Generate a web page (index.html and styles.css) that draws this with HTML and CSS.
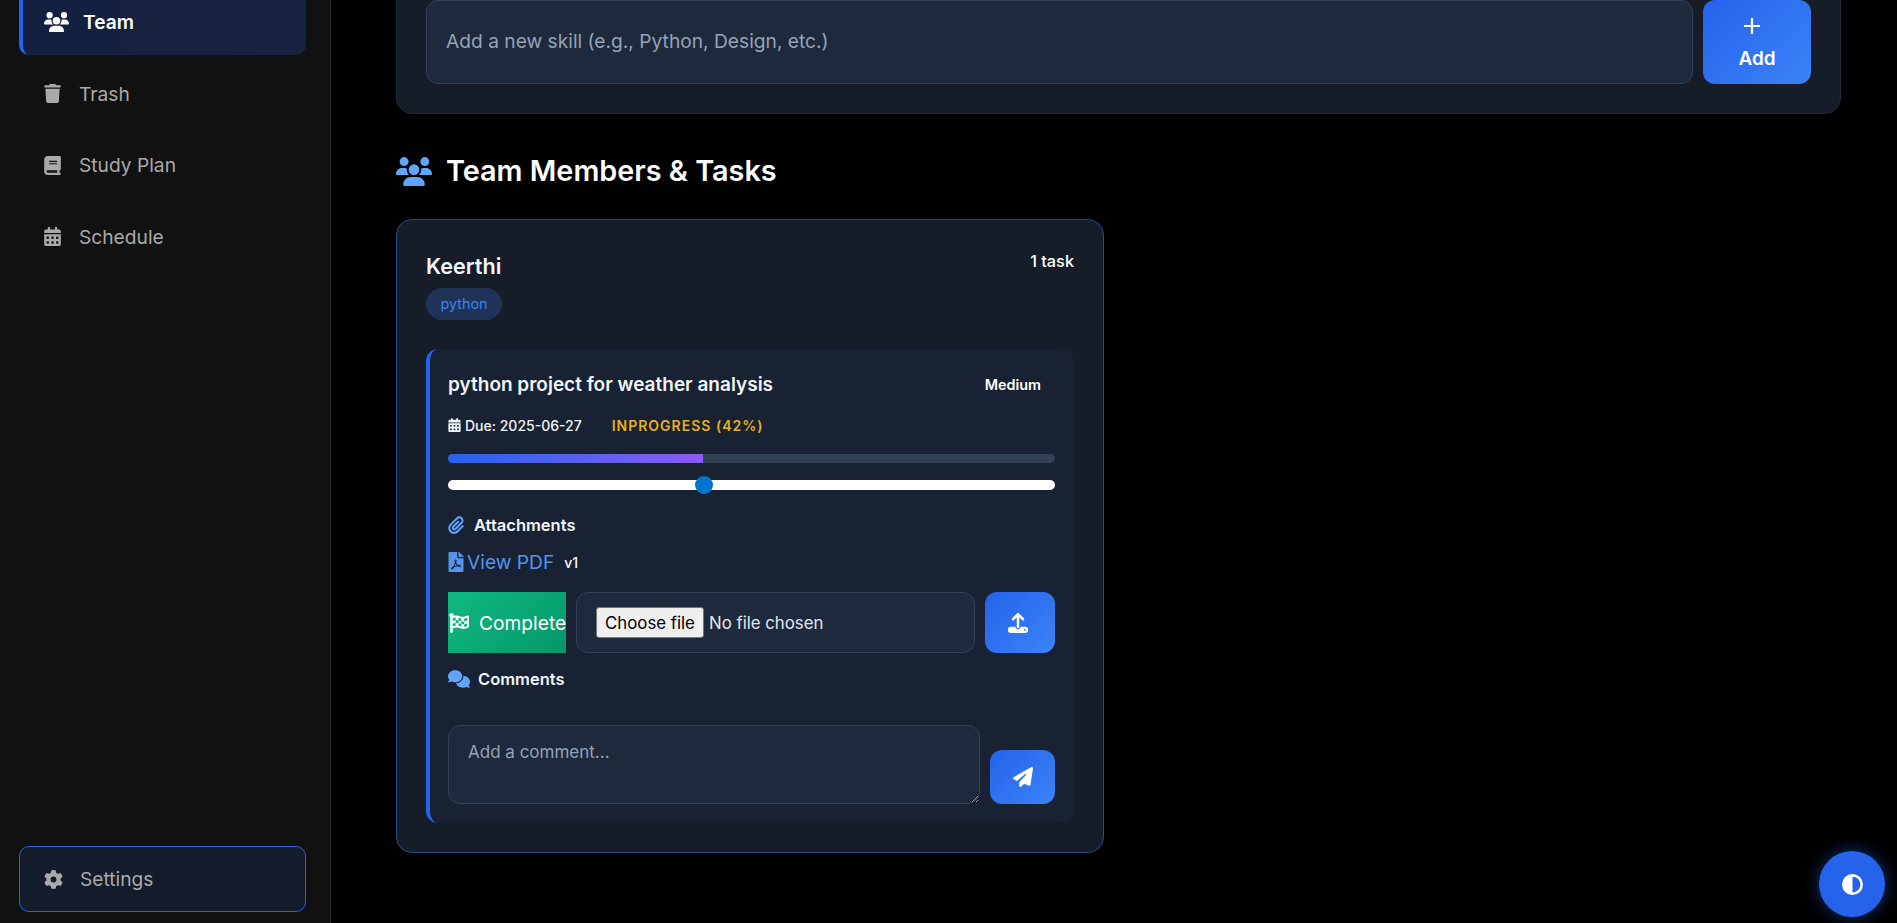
FILE: index.html
```html
<!DOCTYPE html>
<html lang="en">
	<head>
		<meta charset="UTF-8" />
		<title>Team</title>
		<link rel="stylesheet" href="styles.css">
	</head>
	<body>
		<svg class="defs" aria-hidden="true">
			<symbol id="i-users" viewBox="0 0 640 512"><path d="M144 0a80 80 0 1 1 0 160A80 80 0 1 1 144 0zM512 0a80 80 0 1 1 0 160A80 80 0 1 1 512 0zM0 298.7C0 239.8 47.8 192 106.7 192h42.7c15.9 0 31 3.5 44.6 9.7c-1.3 7.2-1.9 14.7-1.9 22.3c0 38.2 16.8 72.5 43.3 96c-.2 0-.4 0-.7 0H21.3C9.6 320 0 310.4 0 298.7zM405.3 320c-.2 0-.4 0-.7 0c26.6-23.5 43.3-57.8 43.3-96c0-7.6-.7-15-1.9-22.3c13.6-6.3 28.7-9.7 44.6-9.7h42.7C592.2 192 640 239.8 640 298.7c0 11.8-9.6 21.3-21.3 21.3H405.3zM224 224a96 96 0 1 1 192 0 96 96 0 1 1 -192 0zM128 485.3C128 411.7 187.7 352 261.3 352H378.7C452.3 352 512 411.7 512 485.3c0 14.7-11.9 26.7-26.7 26.7H154.7c-14.7 0-26.7-11.9-26.7-26.7z"/></symbol>
			<symbol id="i-trash" viewBox="0 0 448 512"><path d="M135.2 17.7L128 32H32C14.3 32 0 46.3 0 64S14.3 96 32 96H416c17.7 0 32-14.3 32-32s-14.3-32-32-32H320l-7.2-14.3C307.4 6.8 296.3 0 284.2 0H163.8c-12.1 0-23.2 6.8-28.6 17.7zM416 128H32L53.2 467c1.6 25.3 22.6 45 47.9 45H346.9c25.3 0 46.3-19.7 47.9-45L416 128z"/></symbol>
			<symbol id="i-book" viewBox="0 0 448 512"><path d="M96 0C43 0 0 43 0 96V416c0 53 43 96 96 96H384h32c17.7 0 32-14.3 32-32s-14.3-32-32-32V384c17.7 0 32-14.3 32-32V32c0-17.7-14.3-32-32-32H384 96zm0 384H352v64H96c-17.7 0-32-14.3-32-32s14.3-32 32-32zm32-240c0-8.8 7.2-16 16-16H336c8.8 0 16 7.2 16 16s-7.2 16-16 16H144c-8.8 0-16-7.2-16-16zm16 48H336c8.8 0 16 7.2 16 16s-7.2 16-16 16H144c-8.8 0-16-7.2-16-16s7.2-16 16-16z"/></symbol>
			<symbol id="i-calendar" viewBox="0 0 448 512"><path d="M128 0c17.7 0 32 14.3 32 32V64H288V32c0-17.7 14.3-32 32-32s32 14.3 32 32V64h48c26.5 0 48 21.5 48 48v48H0V112C0 85.5 21.5 64 48 64H96V32c0-17.7 14.3-32 32-32zM0 192H448V464c0 26.5-21.5 48-48 48H48c-26.5 0-48-21.5-48-48V192zm64 80v32c0 8.8 7.2 16 16 16h32c8.8 0 16-7.2 16-16V272c0-8.8-7.2-16-16-16H80c-8.8 0-16 7.2-16 16zm128 0v32c0 8.8 7.2 16 16 16h32c8.8 0 16-7.2 16-16V272c0-8.8-7.2-16-16-16H208c-8.8 0-16 7.2-16 16zm144-16c-8.8 0-16 7.2-16 16v32c0 8.8 7.2 16 16 16h32c8.8 0 16-7.2 16-16V272c0-8.8-7.2-16-16-16H336zM64 400v32c0 8.8 7.2 16 16 16h32c8.8 0 16-7.2 16-16V400c0-8.8-7.2-16-16-16H80c-8.8 0-16 7.2-16 16zm144-16c-8.8 0-16 7.2-16 16v32c0 8.8 7.2 16 16 16h32c8.8 0 16-7.2 16-16V400c0-8.8-7.2-16-16-16H208zm112 16v32c0 8.8 7.2 16 16 16h32c8.8 0 16-7.2 16-16V400c0-8.8-7.2-16-16-16H336c-8.8 0-16 7.2-16 16z"/></symbol>
			<symbol id="i-cog" viewBox="0 0 512 512"><path d="M495.9 166.6c3.2 8.7 .5 18.4-6.4 24.6l-43.3 39.4c1.1 8.3 1.7 16.8 1.7 25.4s-.6 17.1-1.7 25.4l43.3 39.4c6.9 6.2 9.6 15.9 6.4 24.6c-4.4 11.9-9.7 23.3-15.8 34.3l-4.7 8.1c-6.6 11-14 21.4-22.1 31.2c-5.9 7.2-15.7 9.6-24.5 6.8l-55.7-17.7c-13.4 10.3-28.2 18.9-44 25.4l-12.5 57.1c-2 9.1-9 16.3-18.2 17.8c-13.8 2.3-28 3.5-42.5 3.5s-28.7-1.2-42.5-3.5c-9.2-1.5-16.2-8.7-18.2-17.8l-12.5-57.1c-15.8-6.5-30.6-15.1-44-25.4L83.1 425.9c-8.8 2.8-18.6 .3-24.5-6.8c-8.1-9.8-15.5-20.2-22.1-31.2l-4.7-8.1c-6.1-11-11.4-22.4-15.8-34.3c-3.2-8.7-.5-18.4 6.4-24.6l43.3-39.4C64.6 273.1 64 264.6 64 256s.6-17.1 1.7-25.4L22.4 191.2c-6.9-6.2-9.6-15.9-6.4-24.6c4.4-11.9 9.7-23.3 15.8-34.3l4.7-8.1c6.6-11 14-21.4 22.1-31.2c5.9-7.2 15.7-9.6 24.5-6.8l55.7 17.7c13.4-10.3 28.2-18.9 44-25.4l12.5-57.1c2-9.1 9-16.3 18.2-17.8C227.3 1.2 241.5 0 256 0s28.7 1.2 42.5 3.5c9.2 1.5 16.2 8.7 18.2 17.8l12.5 57.1c15.8 6.5 30.6 15.1 44 25.4l55.7-17.7c8.8-2.8 18.6-.3 24.5 6.8c8.1 9.8 15.5 20.2 22.1 31.2l4.7 8.1c6.1 11 11.4 22.4 15.8 34.3zM256 336a80 80 0 1 0 0-160 80 80 0 1 0 0 160z"/></symbol>
			<symbol id="i-clip" viewBox="0 0 448 512"><path d="M364.2 83.8c-24.4-24.4-64-24.4-88.4 0l-184 184c-42.1 42.1-42.1 110.3 0 152.4s110.3 42.1 152.4 0l152-152c10.9-10.9 28.7-10.9 39.6 0s10.9 28.7 0 39.6l-152 152c-64 64-167.6 64-231.6 0s-64-167.6 0-231.6l184-184c46.3-46.3 121.3-46.3 167.6 0s46.3 121.3 0 167.6l-176 176c-28.6 28.6-75 28.6-103.6 0s-28.6-75 0-103.6l144-144c10.9-10.9 28.7-10.9 39.6 0s10.9 28.7 0 39.6l-144 144c-6.7 6.7-6.7 17.7 0 24.4s17.7 6.7 24.4 0l176-176c24.4-24.4 24.4-64 0-88.4z"/></symbol>
			<symbol id="i-pdf" viewBox="0 0 384 512"><path d="M181.9 256.1c-5-16-4.9-46.9-2-46.9 8.4 0 7.6 36.9 2 46.9zm-1.7 47.2c-7.7 20.2-17.3 43.3-28.4 62.7 18.3-7 39-17.2 62.9-21.9-12.7-9.6-24.9-23.4-34.5-40.8zM86.1 428.1c0 .8 13.2-5.4 34.9-40.2-6.7 6.3-29.1 24.5-34.9 40.2zM248 160h136v328c0 13.3-10.7 24-24 24H24c-13.3 0-24-10.7-24-24V24C0 10.7 10.7 0 24 0h200v136c0 13.2 10.8 24 24 24zm-8 171.8c-20-12.2-33.3-29-42.7-53.8 4.5-18.5 11.6-46.6 6.2-64.2-4.7-29.4-42.4-26.5-47.8-6.8-5 18.3-.4 44.1 8.1 77-11.6 27.6-28.7 64.6-40.8 85.8-.1 0-.1.1-.2.1-27.1 13.9-73.6 44.5-54.5 68 5.6 6.9 16 10 21.5 10 17.9 0 35.7-18 61.1-61.8 25.8-8.5 54.1-19.1 79-23.2 21.7 11.8 47.1 19.5 64 19.5 29.2 0 31.2-32 19.7-43.4-13.9-13.6-54.3-9.7-73.6-7.2zM377 105L279 7c-4.5-4.5-10.6-7-17-7h-6v128h128v-6.1c0-6.3-2.5-12.4-7-16.9zm-74.1 255.3c4.1-2.7-2.5-11.9-42.8-9 37.1 15.8 42.8 9 42.8 9z"/></symbol>
			<symbol id="i-flag" viewBox="0 0 512 512"><path d="M243.2 189.9V258c26.1 5.9 49.3 15.6 73.6 22.3v-68.2c-26-5.8-49.4-15.5-73.6-22.2zm223.3-123c-34.3 15.9-76.5 31.9-117 31.9C296 98.8 251.7 64 184.3 64c-25 0-47.3 4.4-68 12 2.8-7.3 4.1-15.2 3.6-23.6C118.1 24 94.8 1.2 66.3 0 34.3-1.3 8 24.3 8 56c0 19 9.5 35.8 24 45.9V488c0 13.3 10.7 24 24 24h16c13.3 0 24-10.7 24-24v-94.4c28.3-12.1 63.6-22.1 114.4-22.1 53.6 0 97.8 34.8 165.2 34.8 48.2 0 86.7-16.3 122.5-40.9 8.7-6 13.8-15.8 13.8-26.4V95.9c.1-23.3-24.2-38.8-45.4-29zM169.6 325.5c-25.8 2.7-50 8.7-73.6 16.6v-70.5c26.2-9.3 47.5-15 73.6-17.4zM464 191c-23.6 9.8-46.3 19.5-73.6 23.9V286c24.8-3.4 51.4-11.8 73.6-26v70.5c-25.1 16.1-48.5 24.7-73.6 27.6V286c-27 3.7-47.9 1.5-73.6-5.6v67.4c-23.9-7.4-47.3-16.7-73.6-21.3V258c-19.7-4.4-40.8-6.8-73.6-3.8v-70c-22.4 3.1-44.6 10.2-73.6 20.9v-70.5c33.2-12.2 50.1-19.8 73.6-22v71.6c27-3.7 48.4-1.3 73.6 5.7v-67.4c23.7 7.4 47.2 16.7 73.6 21.3v68.4c23.7 5.3 47.6 6.9 73.6 2.7V143c27-4.8 52.3-13.6 73.6-22.5z"/></symbol>
			<symbol id="i-comments" viewBox="0 0 640 512"><path d="M208 352c114.9 0 208-78.8 208-176S322.9 0 208 0S0 78.8 0 176c0 38.6 14.7 74.3 39.6 103.4c-3.5 9.4-8.7 17.7-14.2 24.7c-4.8 6.2-9.7 11-13.3 14.3c-1.8 1.6-3.3 2.9-4.3 3.7c-.5 .4-.9 .7-1.1 .8l-.2 .2 0 0 0 0C1 327.2-1.4 334.4 .8 340.9S9.1 352 16 352c21.8 0 43.8-5.6 62.1-12.5c9.2-3.5 17.8-7.4 25.3-11.4C134.1 343.3 169.8 352 208 352zM448 176c0 112.3-99.1 196.9-216.5 207C255.8 457.4 336.4 512 432 512c38.2 0 73.9-8.7 104.7-23.9c7.5 4 16 7.9 25.2 11.4c18.3 6.9 40.3 12.5 62.1 12.5c6.9 0 13.1-4.5 15.2-11.1c2.1-6.6-.2-13.8-5.8-17.9l0 0 0 0-.2-.2c-.2-.2-.6-.4-1.1-.8c-1-.8-2.5-2-4.3-3.7c-3.6-3.3-8.5-8.1-13.3-14.3c-5.5-7-10.7-15.4-14.2-24.7c24.9-29 39.6-64.7 39.6-103.4c0-92.8-84.9-168.9-192.6-175.5c.4 5.1 .6 10.3 .6 15.5z"/></symbol>
			<symbol id="i-upload" viewBox="0 0 512 512"><path d="M288 109.3V352c0 17.7-14.3 32-32 32s-32-14.3-32-32V109.3l-73.4 73.4c-12.5 12.5-32.8 12.5-45.3 0s-12.5-32.8 0-45.3l128-128c12.5-12.5 32.8-12.5 45.3 0l128 128c12.5 12.5 12.5 32.8 0 45.3s-32.8 12.5-45.3 0L288 109.3zM64 352H192c0 35.3 28.7 64 64 64s64-28.7 64-64H448c35.3 0 64 28.7 64 64v32c0 35.3-28.7 64-64 64H64c-35.3 0-64-28.7-64-64V416c0-35.3 28.7-64 64-64zM432 456a24 24 0 1 0 0-48 24 24 0 1 0 0 48z"/></symbol>
			<symbol id="i-plane" viewBox="0 0 512 512"><path d="M498.1 5.6c10.1 7 15.4 19.1 13.5 31.2l-64 416c-1.5 9.7-7.4 18.2-16 23s-18.9 5.4-28 1.6L284 427.7l-68.5 74.1c-8.9 9.7-22.9 12.9-35.2 8.1S160 493.2 160 480V396.4c0-4 1.5-7.8 4.2-10.7L331.8 202.8c5.8-6.3 5.6-16-.4-22s-15.7-6.4-22-.7L106 360.8 17.7 316.6C7.1 311.3 .3 300.7 0 288.9s5.9-22.8 16.1-28.7l448-256c10.7-6.1 23.9-5.5 34 1.4z"/></symbol>
			<symbol id="i-adjust" viewBox="0 0 512 512"><path d="M448 256c0-106-86-192-192-192V448c106 0 192-86 192-192zM0 256a256 256 0 1 1 512 0A256 256 0 1 1 0 256z"/></symbol>
		</svg>

		<aside class="sidebar">
			<nav class="side-nav">
				<a class="side-link active"><svg class="ic ic-team"><use href="#i-users"/></svg>Team</a>
				<a class="side-link"><svg class="ic"><use href="#i-trash"/></svg>Trash</a>
				<a class="side-link"><svg class="ic"><use href="#i-book"/></svg>Study Plan</a>
				<a class="side-link"><svg class="ic"><use href="#i-calendar"/></svg>Schedule</a>
			</nav>
			<a class="side-link settings"><svg class="ic ic-cog"><use href="#i-cog"/></svg>Settings</a>
		</aside>

		<main class="content">
			<section class="skill-card">
				<input class="skill-input" type="text" placeholder="Add a new skill (e.g., Python, Design, etc.)" />
				<button class="btn-add" type="button">
					<svg class="plus" viewBox="0 0 16 16"><path d="M8 0v16M0 8h16"/></svg>
					<span>Add</span>
				</button>
			</section>

			<h2 class="section-title"><svg class="title-ic"><use href="#i-users"/></svg>Team Members &amp; Tasks</h2>

			<section class="member-card">
				<div class="member-head">
					<div>
						<h3 class="member-name">Keerthi</h3>
						<span class="pill">python</span>
					</div>
					<span class="task-count">1 task</span>
				</div>

				<article class="task">
					<div class="task-head">
						<h4 class="task-title">python project for weather analysis</h4>
						<span class="priority">Medium</span>
					</div>
					<div class="task-meta">
						<span class="due"><svg class="ic-due"><use href="#i-calendar"/></svg>Due: 2025-06-27</span>
						<span class="status">INPROGRESS (42%)</span>
					</div>
					<div class="progress"><div class="progress-fill" style="width:42%"></div></div>
					<input class="slider" type="range" min="0" max="100" value="42" />

					<h5 class="sub-title attach-title"><svg class="ic-clip"><use href="#i-clip"/></svg>Attachments</h5>
					<div class="pdf-row">
						<a class="pdf-link"><svg class="ic-pdf"><use href="#i-pdf"/></svg>View PDF</a>
						<span class="version">v1</span>
					</div>
					<div class="action-row">
						<button class="btn-complete" type="button"><svg class="ic-flag"><use href="#i-flag"/></svg>Complete</button>
						<div class="file-box">
							<button class="file-btn" type="button">Choose file</button>
							<span class="file-name">No file chosen</span>
						</div>
						<button class="btn-blue btn-upload" type="button"><svg class="ic-upload"><use href="#i-upload"/></svg></button>
					</div>

					<h5 class="sub-title comment-title"><svg class="ic-comments"><use href="#i-comments"/></svg>Comments</h5>
					<div class="comment-row">
						<textarea class="comment-input" placeholder="Add a comment..."></textarea>
						<button class="btn-blue btn-send" type="button"><svg class="ic-plane"><use href="#i-plane"/></svg></button>
					</div>
				</article>
			</section>
		</main>

		<button class="theme-toggle" type="button"><svg class="ic-adjust"><use href="#i-adjust"/></svg></button>
	</body>
</html>
```

FILE: styles.css
```css
*{
	box-sizing:border-box;
}
html,body{
	height:100%;
}
body{
	margin:0;
	display:flex;
	overflow:hidden;
	background-color:#000;
	color:#fff;
	font-family:Inter,"Liberation Sans",sans-serif;
}
svg{
	fill:currentColor;
}
.defs{
	display:none;
}

/* sidebar */
.sidebar{
	flex:0 0 331px;
	height:923px;
	padding:0 24px 11px 19px;
	display:flex;
	flex-direction:column;
	justify-content:space-between;
	background-color:#111;
	border-right:1px solid #2a2a2a;
}
.side-nav{
	display:flex;
	flex-direction:column;
	gap:5.5px;
	margin-top:-11px;
}
.side-link{
	height:66px;
	padding-left:25px;
	display:flex;
	align-items:center;
	font-size:19.2px;
	color:#aaa;
	border-radius:10px;
}
.ic{
	width:17px;
	height:19px;
	margin-right:18px;
	flex:none;
}
.active{
	padding-left:21px;
	font-weight:600;
	color:#fff;
	background:linear-gradient(90deg,#14203f,#172240);
	border-left:4px solid #2563eb;
}
.ic-team{
	width:25px;
	height:20px;
	margin-right:14px;
}
.settings{
	padding-left:24px;
	background-color:#141b2a;
	border:1px solid #2563eb;
}
.ic-cog{
	margin-right:17px;
	width:19px;
}

/* main column */
.content{
	flex:1;
	margin-top:-30px;
	padding:0 56px 0 65px;
}
.skill-card{
	height:144px;
	padding:29px;
	display:flex;
	gap:10px;
	background-color:#161d29;
	border:1px solid #1f2937;
	border-radius:16px;
}
.skill-input{
	flex:1;
	padding:0 19px 2px;
	font:19.2px Inter,sans-serif;
	color:#fff;
	background-color:#1e293b;
	border:1px solid #334155;
	border-radius:12px;
}
.skill-input::placeholder,.comment-input::placeholder{
	color:#94a3b8;
}
.btn-add{
	width:108px;
	display:flex;
	flex-direction:column;
	align-items:center;
	justify-content:center;
	gap:13px;
	padding:3px 0 0;
	font:600 19px Inter,sans-serif;
	color:#fff;
	background:linear-gradient(135deg,#2563eb,#3b82f6);
	border:0;
	border-radius:12px;
}
.plus{
	width:16px;
	height:16px;
	fill:none;
	stroke:#fff;
	stroke-width:2.2;
	margin-right:10px;
}
.section-title{
	margin:40px 0 0;
	height:34px;
	padding-bottom:2px;
	display:flex;
	align-items:center;
	font-size:28.8px;
	font-weight:600;
}
.title-ic{
	width:36px;
	height:29px;
	margin:2px 14px 0 0;
	color:#60a5fa;
}
.member-card{
	width:708px;
	height:634px;
	margin-top:31px;
	padding:29px;
	background-color:#161d29;
	border:1px solid #274a8a;
	border-radius:16px;
}
.member-head{
	display:flex;
	justify-content:space-between;
	align-items:flex-start;
}
.member-name{
	margin:0;
	font-size:21.6px;
	font-weight:600;
	line-height:34px;
	color:#f1f5f9;
}
.pill{
	display:inline-block;
	width:76px;
	height:32px;
	margin-top:5px;
	text-align:center;
	font-size:14.4px;
	line-height:32px;
	color:#3b82f6;
	background-color:#1e3357;
	border-radius:16px;
}
.task-count{
	font-size:16.3px;
	font-weight:500;
	line-height:25px;
}

/* task */
.task{
	height:474px;
	margin-top:29px;
	padding:18px 19px 0 18px;
	background-color:#182233;
	border-left:4px solid #2563eb;
	border-radius:12px;
}
.task-head{
	display:flex;
	justify-content:space-between;
	align-items:center;
	height:34px;
}
.task-title{
	margin:0;
	font-size:19px;
	font-weight:600;
	color:#f1f5f9;
}
.priority{
	margin-right:14px;
	font-size:14.4px;
	font-weight:600;
}
.task-meta{
	display:flex;
	align-items:center;
	gap:30px;
	margin-top:10px;
	height:28px;
	font-size:14px;
}
.due{
	display:flex;
	align-items:center;
	font-weight:500;
	color:#f1f5f9;
}
.ic-due{
	width:13px;
	height:14px;
	margin-right:4px;
}
.status{
	font-weight:600;
	letter-spacing:1px;
	color:#eab020;
}
.progress{
	height:9px;
	margin-top:15px;
	background-color:#334155;
	border-radius:5px;
	overflow:hidden;
}
.progress-fill{
	height:100%;
	background:linear-gradient(90deg,#2563eb,#8b5cf6);
}
.slider{
	display:block;
	width:100%;
	height:10px;
	margin:17px 0 0;
	-webkit-appearance:none;
	appearance:none;
	background-color:#fff;
	border-radius:5px;
}
.slider::-webkit-slider-thumb{
	-webkit-appearance:none;
	width:18px;
	height:18px;
	background-color:#0075d0;
	border-radius:50%;
}
.sub-title{
	display:flex;
	align-items:center;
	margin:0;
	font-size:16.5px;
	font-weight:600;
	color:#f1f5f9;
}
.attach-title{
	margin-top:22px;
	height:26px;
}
.ic-clip{
	width:16px;
	height:18px;
	margin-right:10px;
	color:#60a5fa;
}
.pdf-row{
	display:flex;
	align-items:center;
	height:30px;
	margin-top:9px;
}
.pdf-link{
	display:flex;
	align-items:center;
	font-size:19.2px;
	color:#5594e8;
}
.ic-pdf{
	width:16px;
	height:20px;
	margin-right:3px;
}
.version{
	margin-left:10px;
	font-size:14px;
	font-weight:500;
}
.action-row{
	display:flex;
	gap:10px;
	height:61px;
	margin-top:15px;
}
.btn-complete{
	flex:none;
	width:118px;
	padding:0 0 0 1px;
	display:flex;
	align-items:center;
	white-space:nowrap;
	overflow:hidden;
	font:400 19.2px Inter,sans-serif;
	color:#fff;
	background:linear-gradient(135deg,#10b981,#059669);
	border:0;
}
.ic-flag{
	width:20px;
	height:20px;
	margin-right:10px;
	flex:none;
}
.file-box{
	flex:1;
	padding:0 19px;
	display:flex;
	align-items:center;
	gap:5px;
	font-size:16.8px;
	background-color:#1e293b;
	border:1px solid #334155;
	border-radius:12px;
}
.file-btn{
	width:108px;
	height:31px;
	padding:0;
	font:16.8px Inter,sans-serif;
	color:#000;
	background-color:#efefef;
	border:1px solid #767676;
	border-radius:3px;
}
.file-name{
	color:#e2e8f0;
}
.btn-blue{
	display:flex;
	align-items:center;
	justify-content:center;
	padding:0;
	color:#fff;
	background:linear-gradient(135deg,#2563eb,#3b82f6);
	border:0;
	border-radius:12px;
}
.btn-upload{
	flex:none;
	width:70px;
}
.ic-upload,.ic-plane{
	width:20px;
	height:20px;
}
.ic-upload{
	margin-right:5px;
}
.comment-title{
	margin-top:13px;
	height:26px;
}
.ic-comments{
	width:22px;
	height:18px;
	margin-right:8px;
	color:#60a5fa;
}
.comment-row{
	display:flex;
	align-items:flex-end;
	gap:10px;
	margin-top:33px;
}
.comment-input{
	flex:1;
	height:79px;
	padding:16px 19px;
	font:17px Inter,sans-serif;
	color:#fff;
	color-scheme:dark;
	background-color:#1e293b;
	border:1px solid #334155;
	border-radius:12px;
}
.btn-send{
	flex:none;
	width:65px;
	height:54px;
}

/* floating button */
.theme-toggle{
	position:fixed;
	right:12px;
	bottom:6px;
	width:66px;
	height:66px;
	display:flex;
	align-items:center;
	justify-content:center;
	padding:0;
	color:#fff;
	background-color:#2563eb;
	border:0;
	border-radius:50%;
	box-shadow:0 0 16px rgba(37,99,235,.5);
}
.ic-adjust{
	width:21px;
	height:21px;
}
```
